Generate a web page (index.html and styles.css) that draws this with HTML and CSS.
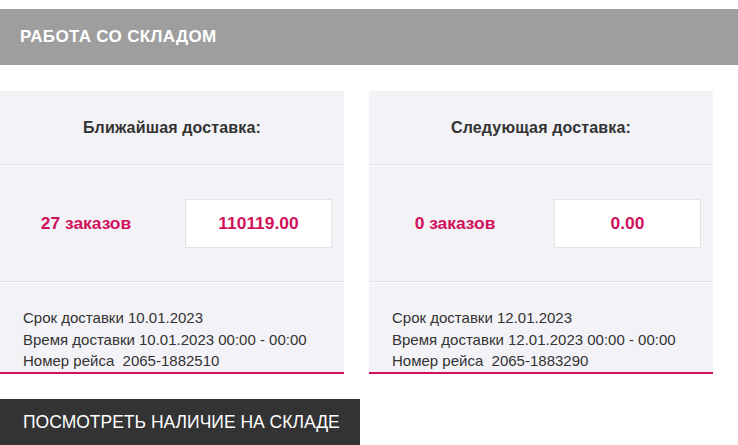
FILE: index.html
```html
<!DOCTYPE html>
<html lang="ru">
<head>
<meta charset="utf-8">
<title>Работа со складом</title>
<link rel="stylesheet" href="styles.css">
</head>
<body>
<div class="page">
  <div class="header">РАБОТА СО СКЛАДОМ</div>
  <div class="cards">
    <div class="card">
      <div class="card-title">Ближайшая доставка:</div>
      <div class="card-main">
        <div class="orders">27 заказов</div>
        <div class="amount-col"><div class="amount">110119.00</div></div>
      </div>
      <div class="card-info">
        <div>Срок доставки 10.01.2023</div>
        <div>Время доставки 10.01.2023 00:00 - 00:00</div>
        <div>Номер рейса&nbsp; 2065-1882510</div>
      </div>
    </div>
    <div class="card">
      <div class="card-title">Следующая доставка:</div>
      <div class="card-main">
        <div class="orders">0 заказов</div>
        <div class="amount-col"><div class="amount">0.00</div></div>
      </div>
      <div class="card-info">
        <div>Срок доставки 12.01.2023</div>
        <div>Время доставки 12.01.2023 00:00 - 00:00</div>
        <div>Номер рейса&nbsp; 2065-1883290</div>
      </div>
    </div>
  </div>
  <div class="btn">ПОСМОТРЕТЬ НАЛИЧИЕ НА СКЛАДЕ</div>
</div>
</body>
</html>
```
FILE: styles.css
```css
html, body {
  margin: 0;
  padding: 0;
  background: #fff;
}
body {
  font-family: "Liberation Sans", Arial, sans-serif;
  color: #333;
}
.page {
  padding-top: 9px;
}
.header {
  height: 56px;
  background: #9e9e9e;
  color: #fff;
  font-weight: bold;
  font-size: 17px;
  letter-spacing: 0.35px;
  display: flex;
  align-items: center;
  padding-left: 20px;
}
.cards {
  display: flex;
  gap: 25px;
  margin-top: 26px;
}
.card {
  width: 344px;
  background: #f2f2f7;
  border-bottom: 2px solid #d1105a;
}
.card-title {
  height: 73px;
  display: flex;
  align-items: center;
  justify-content: center;
  font-weight: bold;
  font-size: 16px;
  letter-spacing: 0.15px;
  color: #333;
  border-bottom: 1px solid #e2e2e8;
}
.card-main {
  height: 115px;
  border-top: 1px solid #fafafc;
  border-bottom: 1px solid #e2e2e8;
  display: grid;
  grid-template-columns: 172px 172px;
  align-items: center;
}
.orders {
  text-align: center;
  color: #d1105a;
  font-weight: bold;
  font-size: 17.4px;
}
.amount {
  width: 145px;
  height: 47px;
  margin-left: 13px;
  background: #fff;
  border: 1px solid #e4e4e8;
  display: flex;
  align-items: center;
  justify-content: center;
  color: #d1105a;
  font-weight: bold;
  font-size: 17.4px;
}
.card-info {
  border-top: 1px solid #fafafc;
  height: 65px;
  padding: 24px 0 0 23px;
  font-size: 15px;
  line-height: 21.5px;
  color: #333;
}
.btn {
  margin-top: 25px;
  width: 337px;
  height: 46px;
  padding-left: 23px;
  background: #333;
  color: #fff;
  font-size: 17.5px;
  display: flex;
  align-items: center;
}
```
